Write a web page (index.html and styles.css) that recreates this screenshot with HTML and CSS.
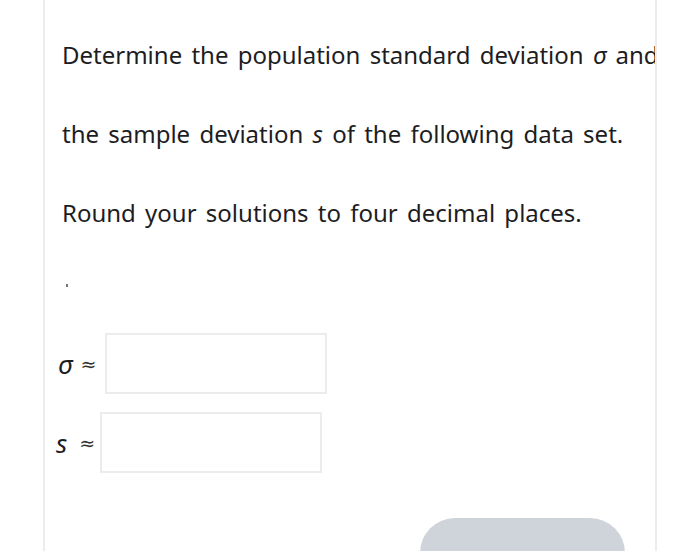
FILE: index.html
```html
<!DOCTYPE html>
<html>
<head>
	<title>Standard deviation</title>
	<link rel="stylesheet" href="styles.css">
</head>
<body>
	<div class="card">
		<p class="line">Determine the population standard deviation <i class="sym">σ</i> and</p>
		<p class="line">the sample deviation <i class="sym">s</i> of the following data set.</p>
		<p class="line">Round your solutions to four decimal places.</p>

		<div class="data"><span class="tick"></span></div>

		<div class="answer sigma">
			<span class="label"><i class="var">σ</i><span class="approx">≈</span></span>
			<div class="box"></div>
		</div>
		<div class="answer samp">
			<span class="label"><i class="var">s</i><span class="approx">≈</span></span>
			<div class="box"></div>
		</div>

		<div class="actions">
			<button class="submit"></button>
		</div>
	</div>
</body>
</html>
```

FILE: styles.css
```css
body {
	margin: 0;
	background: #fff;
	font-family: "Noto Sans", "Open Sans", sans-serif;
	color: #1d1d1f;
	overflow: hidden;
}

.card {
	margin-left: 43px;
	width: 614px;
	height: 620px;
	border-left: 2px solid #ececec;
	border-right: 2px solid #ececec;
	padding: 39px 0 0 17px;
	box-sizing: border-box;
	overflow: hidden;
}

.line {
	margin: 0 0 47px;
	font-size: 24px;
	line-height: 32px;
	word-spacing: 3px;
	white-space: nowrap;
}

.sym {
	font-style: italic;
}

.data {
	height: 40px;
	margin-top: -20px;
}

.tick {
	display: inline-block;
	width: 2px;
	height: 3px;
	margin: 28px 0 0 4px;
	background: #777;
}

.answer {
	display: flex;
	align-items: center;
}

.sigma {
	margin-top: 37px;
}

.samp {
	margin-top: 18px;
	margin-left: -5px;
}

.label {
	display: flex;
	align-items: center;
	width: 47px;
	margin-left: -4px;
	font-size: 26px;
}

.samp .label {
	margin-left: -1px;
	width: 44px;
}

.var {
	font-style: italic;
}

.approx {
	font-family: "DejaVu Sans", sans-serif;
	font-size: 19px;
	margin-left: 8px;
	color: #333;
}

.samp .approx {
	margin-left: 12px;
}

.box {
	width: 218px;
	height: 57px;
	border: 2px solid #ececec;
}

.actions {
	margin-top: 45px;
	padding-left: 358px;
}

.submit {
	width: 205px;
	height: 70px;
	border: none;
	border-radius: 38px;
	background: #cfd3da;
}
```
